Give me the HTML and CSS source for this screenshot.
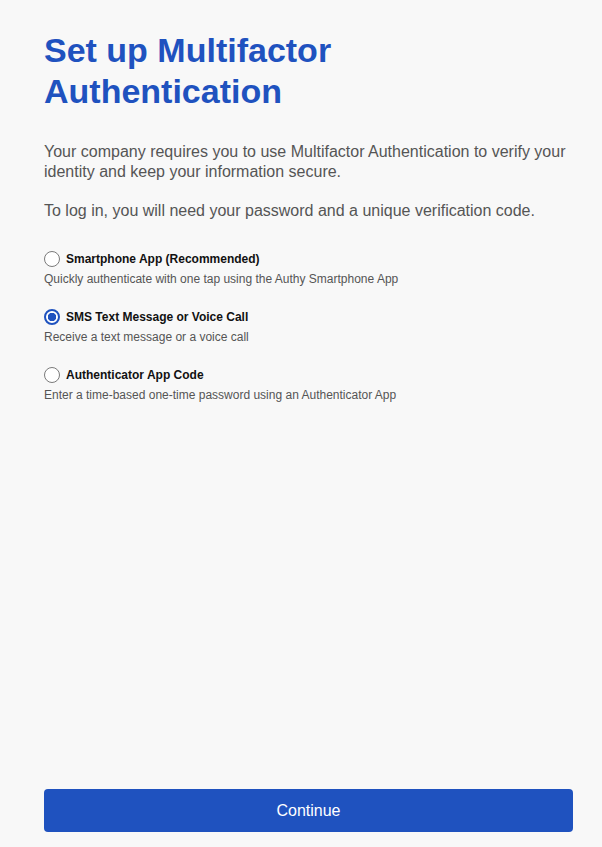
FILE: index.html
```html
<!DOCTYPE html>
<html>
<head>
<meta charset="utf-8">
<link rel="stylesheet" href="styles.css">
</head>
<body>
<div class="page">
  <main class="content">
    <h1 class="title">Set up Multifactor<br>Authentication</h1>
    <p class="lead">Your company requires you to use Multifactor Authentication to verify your identity and keep your information secure.</p>
    <p class="lead">To log in, you will need your password and a unique verification code.</p>
    <div class="options">
      <label class="option">
        <div class="option-head"><span class="radio"></span><span class="option-title">Smartphone App (Recommended)</span></div>
        <div class="option-desc">Quickly authenticate with one tap using the Authy Smartphone App</div>
      </label>
      <label class="option">
        <div class="option-head"><span class="radio checked"></span><span class="option-title">SMS Text Message or Voice Call</span></div>
        <div class="option-desc">Receive a text message or a voice call</div>
      </label>
      <label class="option">
        <div class="option-head"><span class="radio"></span><span class="option-title">Authenticator App Code</span></div>
        <div class="option-desc">Enter a time-based one-time password using an Authenticator App</div>
      </label>
    </div>
  </main>
  <footer class="footer">
    <button class="btn">Continue</button>
  </footer>
</div>
</body>
</html>
```
FILE: styles.css
```css
html, body {
  margin: 0;
  padding: 0;
  background: #f8f8f8;
  height: 100%;
}
body {
  font-family: "Liberation Sans", Arial, sans-serif;
}
.page {
  min-height: 100%;
  display: flex;
  flex-direction: column;
  padding: 0 29px 0 44px;
  box-sizing: border-box;
}
.content {
  flex: 1;
}
.title {
  margin: 30px 0 0;
  font-size: 34px;
  line-height: 41px;
  font-weight: bold;
  color: #1f52bf;
}
.lead {
  margin: 30px 0 0;
  font-size: 16px;
  line-height: 20px;
  color: #555;
}
.lead + .lead {
  margin-top: 19px;
}
.options {
  margin-top: 30px;
  display: flex;
  flex-direction: column;
  gap: 23px;
}
.option {
  display: flex;
  flex-direction: column;
  gap: 5px;
}
.option-head {
  display: flex;
  align-items: center;
  gap: 6px;
}
.radio {
  width: 16px;
  height: 16px;
  box-sizing: border-box;
  border: 1px solid #7a7a7a;
  border-radius: 50%;
  background: #fff;
  flex: none;
}
.radio.checked {
  border: 2px solid #1f52bf;
  background: radial-gradient(circle, #1f52bf 0 4px, #fff 4.5px);
}
.option-title {
  font-size: 12px;
  font-weight: bold;
  color: #111;
  line-height: 16px;
}
.option-desc {
  font-size: 12px;
  color: #555;
  line-height: 14px;
}
.footer {
  padding-bottom: 15px;
}
.btn {
  display: block;
  width: 100%;
  height: 43px;
  border: none;
  border-radius: 4px;
  background: #1f52bf;
  color: #fff;
  font-family: "Liberation Sans", Arial, sans-serif;
  font-size: 16px;
}
```
